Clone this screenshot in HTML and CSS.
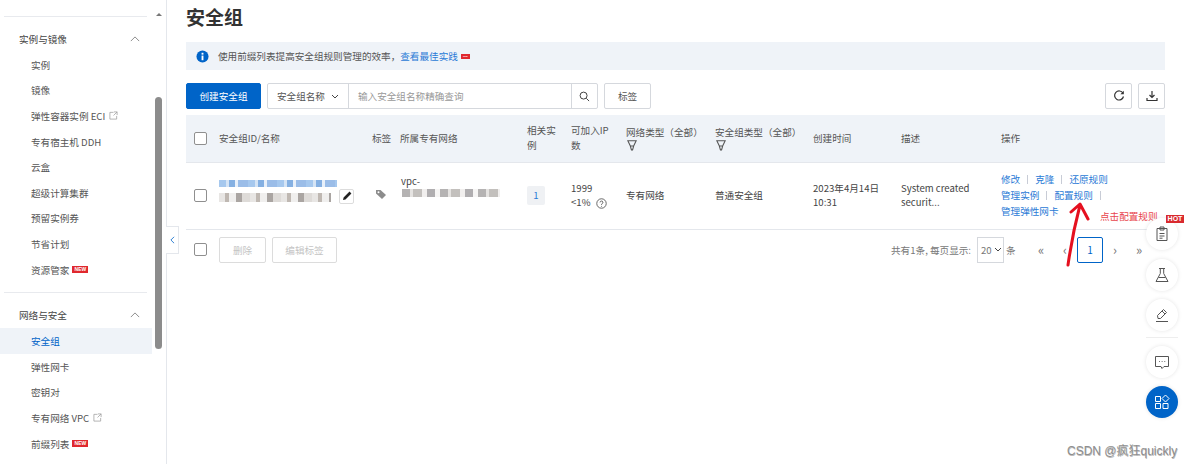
FILE: index.html
```html
<!DOCTYPE html>
<html lang="zh-CN">
<head>
<meta charset="utf-8">
<title>安全组</title>
<link rel="stylesheet" href="styles.css">
</head>
<body>
<div class="page">
  <aside class="sidebar">
    <nav class="nav">
      <section class="group">
        <div class="group-head"><span>实例与镜像</span><svg class="caret" viewBox="0 0 12 7"><path d="M1 6l5-5 5 5"/></svg></div>
        <a class="item">实例</a>
        <a class="item">镜像</a>
        <a class="item">弹性容器实例 ECI<svg class="ext" viewBox="0 0 10 10"><path d="M5 1.500H1v7.500h7.500V5.500M5.500 1h3.500v3.500M9 1L5 5"/></svg></a>
        <a class="item">专有宿主机 DDH</a>
        <a class="item">云盒</a>
        <a class="item">超级计算集群</a>
        <a class="item">预留实例券</a>
        <a class="item">节省计划</a>
        <a class="item">资源管家<span class="new">NEW</span></a>
      </section>
      <section class="group">
        <div class="group-head"><span>网络与安全</span><svg class="caret" viewBox="0 0 12 7"><path d="M1 6l5-5 5 5"/></svg></div>
        <a class="item active">安全组</a>
        <a class="item">弹性网卡</a>
        <a class="item">密钥对</a>
        <a class="item">专有网络 VPC<svg class="ext" viewBox="0 0 10 10"><path d="M5 1.500H1v7.500h7.500V5.500M5.500 1h3.500v3.500M9 1L5 5"/></svg></a>
        <a class="item">前缀列表<span class="new">NEW</span></a>
      </section>
    </nav>
    <div class="scrollbar">
      <span class="scroll-up"></span>
      <span class="scroll-thumb"></span>
    </div>
  </aside>
  <button class="collapse"><svg viewBox="0 0 6 10"><path d="M5 1L1 5l4 4"/></svg></button>

  <main class="main">
    <h1 class="title">安全组</h1>
    <div class="notice">
      <svg class="notice-icon" viewBox="0 0 14 14"><circle cx="7" cy="7" r="6.500" fill="#0064c8"/><rect x="6" y="6" width="2" height="5" fill="#fff"/><rect x="6" y="3" width="2" height="2" fill="#fff"/></svg>
      <span>使用前缀列表提高安全组规则管理的效率，</span><a class="link">查看最佳实践</a><span class="new tiny">NEW</span>
    </div>

    <div class="toolbar">
      <button class="btn primary">创建安全组</button>
      <div class="search">
        <div class="search-type">安全组名称<svg class="down" viewBox="0 0 8 5"><path d="M1 1l3 3 3-3"/></svg></div>
        <div class="search-input">输入安全组名称精确查询</div>
        <div class="search-btn"><svg viewBox="0 0 12 12"><circle cx="5" cy="5" r="3.800"/><path d="M8 8l3 3"/></svg></div>
      </div>
      <button class="btn tag-btn">标签</button>
      <div class="tools">
        <button class="btn icon"><svg viewBox="0 0 12 12"><path d="M10 3.200A4.500 4.500 0 1 0 10.500 6.500"/><path class="fillp" d="M10.800 0.800v3.400H7.400z"/></svg></button>
        <button class="btn icon"><svg viewBox="0 0 12 12"><path d="M6 1v6.500M3.500 5L6 7.500 8.500 5M1 8v2.500h10V8"/></svg></button>
      </div>
    </div>

    <table class="grid">
      <colgroup>
        <col class="c1"><col class="c2"><col class="c3"><col class="c4"><col class="c5"><col class="c6"><col class="c7"><col class="c8"><col class="c9"><col class="c10"><col class="c11">
      </colgroup>
      <thead>
        <tr>
          <th class="check"><span class="box"></span></th>
          <th>安全组ID/名称</th>
          <th>标签</th>
          <th>所属专有网络</th>
          <th>相关实例</th>
          <th>可加入IP数</th>
          <th>网络类型（全部）<svg class="funnel" viewBox="0 0 9 10"><path d="M.7.700h7.600L6 5.500H3zM3 5.500L4 9h1l1-3.500"/></svg></th>
          <th>安全组类型（全部）<svg class="funnel" viewBox="0 0 9 10"><path d="M.7.700h7.600L6 5.500H3zM3 5.500L4 9h1l1-3.500"/></svg></th>
          <th>创建时间</th>
          <th>描述</th>
          <th>操作</th>
        </tr>
      </thead>
      <tbody>
        <tr>
          <td class="check"><span class="box"></span></td>
          <td>
            <div class="name-cell">
              <div class="masked">
                <span class="blur blur-blue"></span>
                <span class="blur blur-gray"></span>
              </div>
              <span class="edit"><svg viewBox="0 0 10 10"><path d="M1 9l.6-2.500L6.800 1.300l1.900 1.900L3.500 8.400zM6.800 1.300l.7-.7 1.900 1.900-.7.700" fill="#222" stroke="none"/></svg></span>
            </div>
          </td>
          <td><svg class="tag" viewBox="0 0 10 10"><path d="M0 1h4.500L10 6 6 10 0 4.500z" fill="#8c8c8c"/><circle cx="2.500" cy="3.200" r="1" fill="#fff"/></svg></td>
          <td class="vpc-cell">
            <div class="vpc">vpc-</div>
            <span class="blur blur-vpc"></span>
          </td>
          <td><span class="count">1</span></td>
          <td>1999<br>&lt;1% <svg class="help" viewBox="0 0 10 10"><circle cx="5" cy="5" r="4.300"/><path d="M3.700 4a1.300 1.300 0 1 1 1.900 1.200C5.100 5.500 5 5.700 5 6.300M5 7.200v.7"/></svg></td>
          <td>专有网络</td>
          <td>普通安全组</td>
          <td>2023年4月14日<br>10:31</td>
          <td class="desc">System created<br>securit...</td>
          <td class="ops">
            <div><a class="link">修改</a><i></i><a class="link">克隆</a><i></i><a class="link">还原规则</a></div>
            <div><a class="link">管理实例</a><i></i><a class="link">配置规则</a><i></i></div>
            <div><a class="link">管理弹性网卡</a></div>
          </td>
        </tr>
      </tbody>
    </table>

    <div class="footer">
      <span class="box"></span>
      <button class="btn ghost">删除</button>
      <button class="btn ghost wide">编辑标签</button>
      <div class="pager">
        <span>共有1条, 每页显示:</span>
        <span class="size">20<svg class="down" viewBox="0 0 8 5"><path d="M1 1l3 3 3-3"/></svg></span>
        <span class="unit">条</span>
        <span class="pg first-pg">«</span>
        <span class="pg prev">‹</span>
        <span class="pg current">1</span>
        <span class="pg next">›</span>
        <span class="pg last-pg">»</span>
      </div>
    </div>
  </main>
</div>

<svg class="arrow" viewBox="0 0 27 70"><path d="M4 66C7 45 11 25 16 6M7 13L16 5 24 20"/></svg>
<span class="note">点击配置规则</span>

<div class="floats">
  <span class="hot">HOT</span>
  <button class="fab"><svg viewBox="0 0 16 16"><path d="M3 2.500h10v12H3zM6 1h4v3H6zM5.500 7.500h5M5.500 10h5M5.500 12.200h3"/></svg></button>
  <button class="fab"><svg viewBox="0 0 16 16"><path d="M5 1.500h6M6.300 1.500v5L2 14.500h12L9.700 6.500v-5M4.500 10.500h7"/></svg></button>
  <button class="fab pen"><svg viewBox="0 0 16 16"><path d="M2 14.500h12M4 11.500l-.5-3 6-6 3 3-6 6zM8 4l3 3"/></svg></button>
  <span class="float-line"></span>
  <button class="fab chat"><svg viewBox="0 0 16 16"><path d="M1.500 2.500h13v10H10L8 14.500 7 12.500H1.500z"/><path class="dots" d="M5 7.500h.8M7.700 7.500h.8M10.400 7.500h.8"/></svg></button>
  <button class="fab blue"><svg viewBox="0 0 16 16"><path d="M1.500 2.500h5v5h-5zM1.500 9.500h5v5h-5zM9 9.500h5v5H9zM11.500 1l3.500 3.500L11.500 8 8 4.500z"/></svg></button>
</div>
<div class="watermark">CSDN @疯狂quickly</div>
</body>
</html>
```
FILE: styles.css
```css
* { box-sizing: border-box; }
html, body { margin: 0; height: 464px; overflow: hidden; background: #fff; }
body { font: 9.600px/14px "Noto Sans CJK SC", "Noto Sans", sans-serif; color: #444; position: relative; }
svg { display: inline-block; fill: none; stroke: currentColor; stroke-width: 1; }
button { font: inherit; margin: 0; cursor: pointer; }

.page { display: flex; height: 464px; }

/* Sidebar */
.sidebar { position: relative; flex: 0 0 167px; height: 464px; border-right: 1px solid #e4e7ec; overflow: hidden; }
.nav { width: 152px; padding-top: 16px; }
.group { border-top: 1px solid #e8eaee; margin: 0 5px 0 4px; padding-bottom: 10px; }
.group-head { display: flex; justify-content: space-between; align-items: center; height: 35px; padding: 9px 7px 0 15px; color: #444; }
.caret { width: 10px; height: 6px; color: #777; }
.item { display: flex; align-items: center; gap: 3px; height: 25.600px; margin: 0 -5px 0 -4px; padding-left: 31px; color: #555; white-space: pre; }
.item.active { background: #eff3f8; color: #0064c8; }
.ext { width: 9px; height: 9px; margin-left: 1px; color: #999; stroke-width: .8; }
.new { display: inline-block; width: 16px; height: 7px; background: #e0282e; color: #fff; font: 700 5px/7px "Liberation Sans", sans-serif; text-align: center; }
.new.tiny { width: 9px; height: 5px; font-size: 2px; line-height: 5px; margin-left: 3px; }

.scrollbar { position: absolute; left: 155px; top: 8px; width: 8px; height: 456px; }
.scroll-up { position: absolute; left: 1px; top: 5px; border: 3px solid transparent; border-bottom: 3px solid #777; border-top: 0; }
.scroll-thumb { position: absolute; left: 0; top: 89px; width: 7px; height: 252px; background: #8c8c8c; border-radius: 3.500px; }

.collapse { position: absolute; left: 166px; top: 226px; width: 13px; height: 28px; padding: 0; background: #fff; border: 1px solid #e4e7ec; border-left: 0; display: flex; align-items: center; justify-content: center; color: #0064c8; }
.collapse svg { width: 5px; height: 8px; }

/* Main */
.main { flex: 1; min-width: 0; padding: 0 19px; }
.title { margin: 0; height: 42px; padding-top: 3px; font-size: 19px; line-height: 28px; font-weight: 700; color: #333; }
.notice { display: flex; align-items: center; height: 28px; padding-left: 10px; background: #eff3f8; color: #555; }
.notice-icon { width: 13px; height: 13px; margin-right: 9px; stroke: none; }
.link { color: #2a7ad6; }

.toolbar { display: flex; align-items: center; height: 26px; margin-top: 13px; }
.btn { height: 26px; padding: 0; background: #fff; border: 1px solid #d5d8dd; border-radius: 2px; color: #555; display: inline-flex; align-items: center; justify-content: center; }
.btn.primary { width: 75px; background: #0064c8; border-color: #0064c8; color: #fff; margin-right: 6px; }
.search { display: flex; width: 331px; height: 26px; border: 1px solid #d5d8dd; border-radius: 2px; }
.search-type { display: flex; align-items: center; gap: 6px; width: 81px; padding-left: 9px; border-right: 1px solid #d5d8dd; color: #555; }
.down { width: 8px; height: 5px; color: #444; }
.search-input { flex: 1; display: flex; align-items: center; padding-left: 9px; color: #999; }
.search-btn { width: 26px; display: flex; align-items: center; justify-content: center; border-left: 1px solid #d5d8dd; color: #333; }
.search-btn svg { width: 11px; height: 11px; }
.btn.tag-btn { width: 47px; margin-left: 6px; }
.tools { margin-left: auto; display: flex; gap: 6px; }
.btn.icon { width: 27px; color: #333; }
.btn.icon svg { width: 12px; height: 12px; stroke-width: 1.200; }
.fillp { fill: currentColor; stroke: none; }

/* Table */
.grid { width: 979px; margin-top: 6px; border-collapse: collapse; table-layout: fixed; }
.c1 { width: 33px; } .c2 { width: 153px; } .c3 { width: 28px; } .c4 { width: 127px; } .c5 { width: 44px; }
.c6 { width: 55px; } .c7 { width: 89px; } .c8 { width: 98px; } .c9 { width: 88px; } .c10 { width: 100px; } .c11 { width: 164px; }
.grid th { height: 47px; padding: 0 8px 0 0; background: #eff3f8; font-weight: 400; line-height: 15px; text-align: left; color: #555; border-bottom: 1px solid #e4e7ec; }
.grid td { height: 67px; padding: 0 0 1px; border-bottom: 1px solid #e4e7ec; color: #444; }
.grid .check { padding: 0 0 0 8px; }
.box { display: block; width: 13px; height: 13px; background: #fff; border: 1px solid #8f8f8f; border-radius: 2px; }
.funnel { display: block; width: 10px; height: 11px; margin-left: 1px; color: #555; }

.name-cell { display: flex; align-items: flex-end; gap: 2px; margin-bottom: 9px; }
.masked { display: flex; flex-direction: column; gap: 6px; }
.blur { display: block; filter: blur(.7px); }
.blur-blue { width: 118px; height: 7px; background: repeating-linear-gradient(90deg, #a6c8ee 0 7px, #d5e4f5 7px 10px, #85b0e2 10px 16px, #e8f0fa 16px 19px, #9bbde8 19px 29px); }
.blur-gray { width: 112px; height: 9px; background: repeating-linear-gradient(90deg, #e8e6e4 0 6px, #bfb8b2 6px 10px, #f0efee 10px 17px, #aaa5a2 17px 23px, #dedbd8 23px 31px); }
.blur-vpc { width: 98px; height: 8px; margin: 2px 0 0 2px; background: repeating-linear-gradient(90deg, #b5b3b3 0 8px, #e5e3e1 8px 11px, #c3c0bd 11px 20px, #f1efee 20px 25px, #b0aeb0 25px 33px, #f6f5f4 33px 38px); }
.edit { display: flex; align-items: center; justify-content: center; width: 15px; height: 15px; margin-bottom: -2px; border: 1px solid #dcdcdc; border-radius: 2px; background: #fff; }
.edit svg { width: 10px; height: 10px; }
.tag { width: 10px; height: 10px; margin-left: 4px; stroke: none; }
.grid .vpc-cell { padding-bottom: 20px; }
.vpc { margin-left: 1px; line-height: 12px; }
.count { display: flex; align-items: center; justify-content: center; width: 18px; height: 19px; background: #eff1f4; border-radius: 2px; color: #2a7ad6; }
.help { width: 11px; height: 11px; margin-left: 3px; vertical-align: -3px; color: #555; stroke-width: .8; }
.desc { line-height: 14px; }
.ops { line-height: 16px; }
.ops i { display: inline-block; width: 1px; height: 9px; margin: 0 7px; background: #c8ccd6; vertical-align: -1px; }

/* Footer */
.footer { display: flex; align-items: center; height: 26px; margin-top: 7px; padding-left: 8px; }
.footer .box { margin-right: 12px; }
.btn.ghost { width: 47px; color: #c4c4c4; border-color: #dcdcdc; margin-right: 6px; }
.btn.ghost.wide { width: 65px; }
.pager { margin-left: auto; display: flex; align-items: center; height: 26px; color: #777; padding-right: 14px; }
.size { display: flex; align-items: center; gap: 2px; width: 27px; height: 26px; margin-left: 6px; padding-left: 3px; border: 1px solid #d5d8dd; }
.unit { margin-left: 2px; width: 18px; }
.pg { display: flex; align-items: center; justify-content: center; width: 24px; height: 26px; font-size: 13px; color: #777; }
.pg.first-pg { margin-left: 5px; }
.pg.current { width: 26px; border: 1px solid #0064c8; border-radius: 2px; color: #0064c8; font-size: 10px; }

/* Annotation overlay */
.arrow { position: absolute; left: 1064px; top: 199px; width: 27px; height: 70px; color: #e5101f; stroke-width: 3; stroke-linecap: round; stroke-linejoin: round; }
.note { position: absolute; left: 1100px; top: 209px; color: #e8454d; }

/* Floating helpers */
.floats { position: absolute; left: 1146px; top: 218px; width: 32px; display: flex; flex-direction: column; }
.fab { flex: none; width: 32px; height: 32px; padding: 0; border: 0; border-radius: 50%; background: #fff; box-shadow: 0 0 4px rgba(0,0,0,.1); display: flex; align-items: center; justify-content: center; color: #555; margin-bottom: 8.500px; }
.fab svg { width: 16px; height: 16px; }
.fab.pen { margin-bottom: 6px; }
.fab.chat { margin-bottom: 8px; }
.dots { stroke-width: 1.200; }
.float-line { height: 1px; margin-bottom: 8px; background: #eee; }
.fab.blue { background: #0064c8; color: #fff; margin-bottom: 0; }
.hot { position: absolute; right: -6px; top: -3px; width: 18px; height: 8px; background: #d92a2f; color: #fff; font: 700 7px/8px "Liberation Sans", sans-serif; text-align: center; z-index: 1; }

.watermark { position: absolute; left: 1067px; top: 444px; font: 12px/14px "Liberation Sans", "Noto Sans CJK SC", sans-serif; color: #8f8f8f; text-shadow: .5px .5px 0 #bbb; white-space: nowrap; }
```
